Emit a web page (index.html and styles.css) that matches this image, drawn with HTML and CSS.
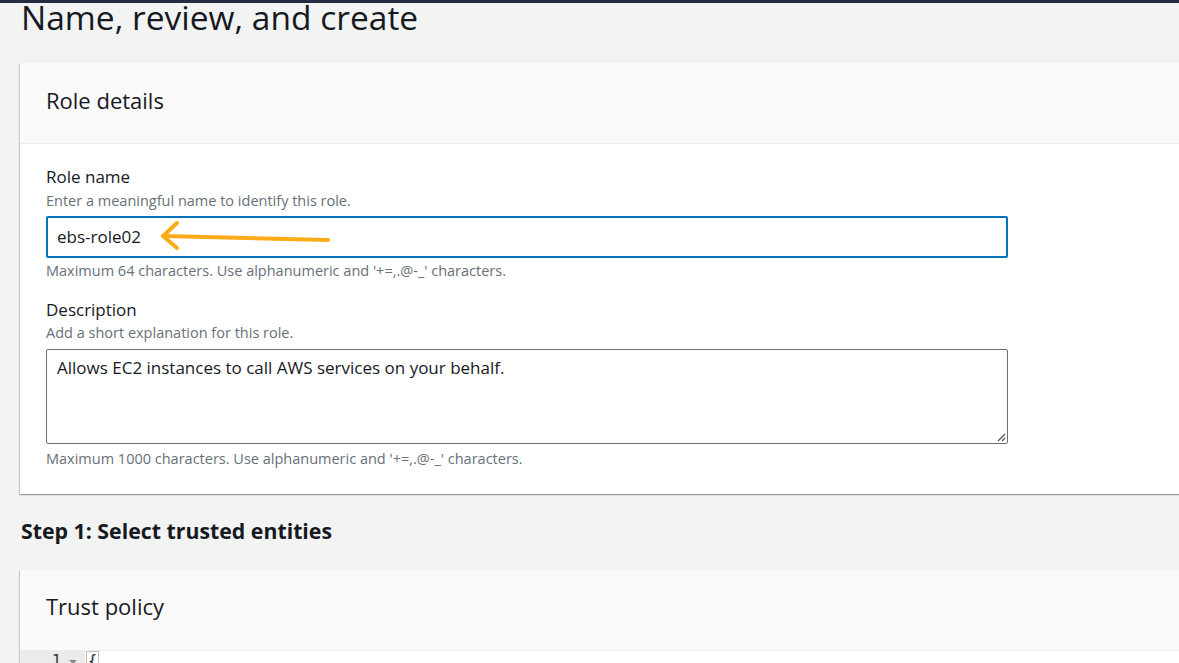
FILE: index.html
```html
<!DOCTYPE html>
<html lang="en">
<head>
<meta charset="utf-8">
<title>Name, review, and create</title>
<link rel="stylesheet" href="styles.css">
</head>
<body>
<div class="topbar"></div>
<main class="main">
  <h1 class="page-title">Name, review, and create</h1>

  <section class="card">
    <header class="card-header"><h2>Role details</h2></header>
    <div class="card-body">
      <div class="field">
        <div class="field-label">Role name</div>
        <div class="field-desc">Enter a meaningful name to identify this role.</div>
        <div class="input-wrap">
          <div class="input focused">ebs-role02</div>
          <svg class="arrow" width="200" height="40" viewBox="0 0 200 40">
            <g fill="none" stroke="#fbab18" stroke-width="4" stroke-linecap="round" stroke-linejoin="round">
              <path d="M168 25 L3 21"/>
              <path d="M17 8 L3 21 L17 33"/>
            </g>
          </svg>
        </div>
        <div class="field-constraint">Maximum 64 characters. Use alphanumeric and '+=,.@-_' characters.</div>
      </div>
      <div class="field field-2">
        <div class="field-label">Description</div>
        <div class="field-desc">Add a short explanation for this role.</div>
        <div class="textarea">Allows EC2 instances to call AWS services on your behalf.
          <svg class="grip" width="10" height="10" viewBox="0 0 10 10">
            <path d="M2 9 L9 2 M6 9 L9 6" stroke="#555" stroke-width="1.3" fill="none"/>
          </svg>
        </div>
        <div class="field-constraint">Maximum 1000 characters. Use alphanumeric and '+=,.@-_' characters.</div>
      </div>
    </div>
  </section>

  <h2 class="step-title">Step 1: Select trusted entities</h2>

  <section class="card card-2">
    <header class="card-header"><h2>Trust policy</h2></header>
    <div class="editor">
      <div class="gutter"><span class="ln">1</span><span class="fold"></span></div>
      <div class="code"><span class="brace">{</span></div>
    </div>
  </section>
</main>
</body>
</html>
```
FILE: styles.css
```css
html, body {
  margin: 0;
  padding: 0;
}
body {
  background: #f2f3f3;
  font-family: "Open Sans", "Noto Sans", Arial, sans-serif;
  color: #16191f;
  overflow: hidden;
  height: 663px;
}
.topbar {
  height: 3px;
  background: #232f3e;
}
.main {
  padding-left: 20px;
}
.page-title {
  margin: 0 0 0 1px;
  font-weight: 400;
  font-size: 33.5px;
  line-height: 28px;
  height: 60px;
  color: #16191f;
}
.card {
  background: #ffffff;
  box-shadow: 0 1px 1px 0 rgba(0, 28, 36, 0.3), -1px 1px 1px 0 rgba(0, 28, 36, 0.15);
  width: 1200px;
}
.card-header {
  height: 81px;
  background: #fafafa;
  border-bottom: 1px solid #eaeded;
  display: flex;
  align-items: center;
  padding: 0 27px 6px 26px;
  box-sizing: border-box;
}
.card-header h2 {
  margin: 0;
  font-weight: 400;
  font-size: 22px;
  line-height: 26px;
}
.card-2 .card-header {
  padding-bottom: 8px;
}
.card-body {
  padding: 22px 27px 25px 26px;
}
.field-label {
  font-size: 17px;
  line-height: 22px;
}
.field-desc {
  font-size: 14.5px;
  line-height: 20px;
  color: #687078;
  margin-top: 3px;
}
.field-constraint {
  font-size: 14.5px;
  line-height: 20px;
  color: #687078;
  margin-top: 3px;
}
.input-wrap {
  position: relative;
  margin-top: 5px;
  width: 962px;
}
.input {
  height: 42px;
  box-sizing: border-box;
  border: 2px solid #0073bb;
  border-radius: 2px;
  padding: 0 9px;
  font-size: 17px;
  line-height: 38px;
  background: #fff;
}
.arrow {
  position: absolute;
  left: 114px;
  top: -1px;
}
.field-2 {
  margin-top: 18px;
}
.field-2 .field-desc {
  margin-top: 2px;
}
.textarea {
  position: relative;
  margin-top: 6px;
  width: 962px;
  height: 95px;
  box-sizing: border-box;
  border: 1px solid #687078;
  border-radius: 2px;
  padding: 6px 10px;
  font-size: 17px;
  line-height: 24px;
  background: #fff;
}
.field-2 .field-constraint {
  margin-top: 5px;
}
.grip {
  position: absolute;
  right: 1px;
  bottom: 1px;
}
.step-title {
  margin: 0;
  font-size: 21.3px;
  font-weight: 700;
  line-height: 26px;
  padding: 24px 0 26px 1px;
}
.editor {
  display: flex;
  height: 40px;
  background: #fff;
}
.gutter {
  width: 65px;
  box-sizing: border-box;
  background: #ebebeb;
  display: flex;
  justify-content: flex-end;
  align-items: flex-start;
  padding-right: 8px;
  font-family: "DejaVu Sans Mono", monospace;
  font-size: 15px;
  line-height: 20px;
  color: #333;
}
.ln {
  margin-right: 8px;
}
.fold {
  width: 0;
  height: 0;
  border-left: 4px solid transparent;
  border-right: 4px solid transparent;
  border-top: 4px solid #888;
  margin-top: 9px;
}
.code {
  padding-left: 1px;
  font-family: "DejaVu Sans Mono", monospace;
  font-size: 15px;
  line-height: 20px;
}
.brace {
  display: inline-block;
  border: 1px solid #bfbfbf;
  line-height: 18px;
  padding: 0 1px;
}
```
